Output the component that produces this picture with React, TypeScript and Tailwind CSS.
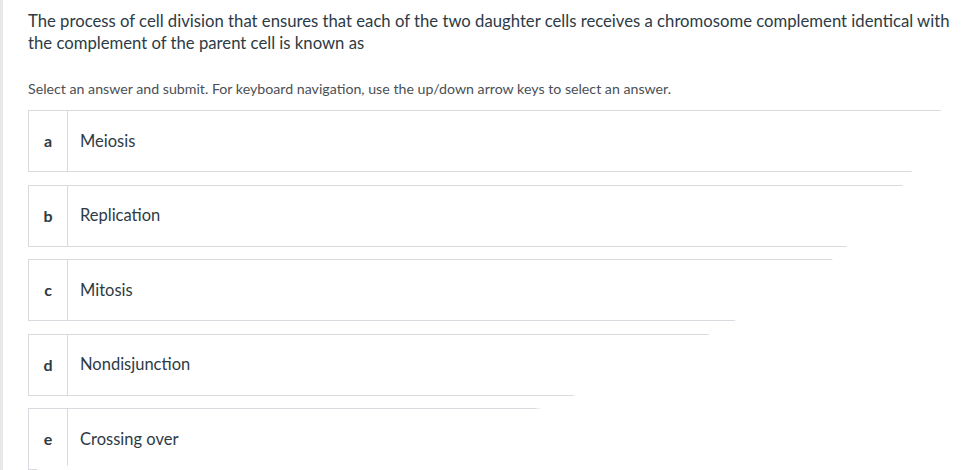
import React from 'react';

const answers = [
  { key: 'a', text: 'Meiosis' },
  { key: 'b', text: 'Replication' },
  { key: 'c', text: 'Mitosis' },
  { key: 'd', text: 'Nondisjunction' },
  { key: 'e', text: 'Crossing over' },
];

export default function App() {
  return (
    <div
      className="relative w-[976px] h-[470px] overflow-hidden bg-white border-l-[3px] border-[#e8e8ea]"
      style={{ fontFamily: 'Lato, "Noto Sans", sans-serif' }}
    >
      <div className="pl-[25px] pr-[20px] pt-[10px]">
        {/* Question */}
        <p className="text-[16.7px] leading-[22px] text-[#2d3b45]">
          The process of cell division that ensures that each of the two daughter cells receives a chromosome complement identical with the complement of the parent cell is known as
        </p>

        <p className="mt-[26px] text-[14.2px] leading-[18px] text-[#4a4f55]">
          Select an answer and submit. For keyboard navigation, use the up/down arrow keys to select an answer.
        </p>

        {/* Answers */}
        <div className="mt-[12px] flex flex-col gap-[12.5px]">
          {answers.map((a) => (
            <div key={a.key} className="flex h-[62px] border border-[#d9d9e0] w-[925px]">
              <div className="w-[39px] flex items-center justify-center border-r border-[#d9d9e0] text-[16px] font-bold text-[#2d3b45]">
                {a.key}
              </div>
              <div className="flex items-center pl-[12px] text-[16.5px] text-[#2d3b45]">{a.text}</div>
            </div>
          ))}
        </div>
      </div>

      {/* white curled edge covering lower right */}
      <svg className="absolute inset-0 pointer-events-none" width="976" height="470">
        <path
          d="M 965 50 L 938 110 L 909 171 L 900 185 L 844 246 L 830 259 L 733 320 L 707 334 L 572 395 L 539 408 Q 250 445 80 464 L 34 469 L 34 470 L 976 470 L 976 50 Z"
          fill="#ffffff"
        />
      </svg>
    </div>
  );
}
